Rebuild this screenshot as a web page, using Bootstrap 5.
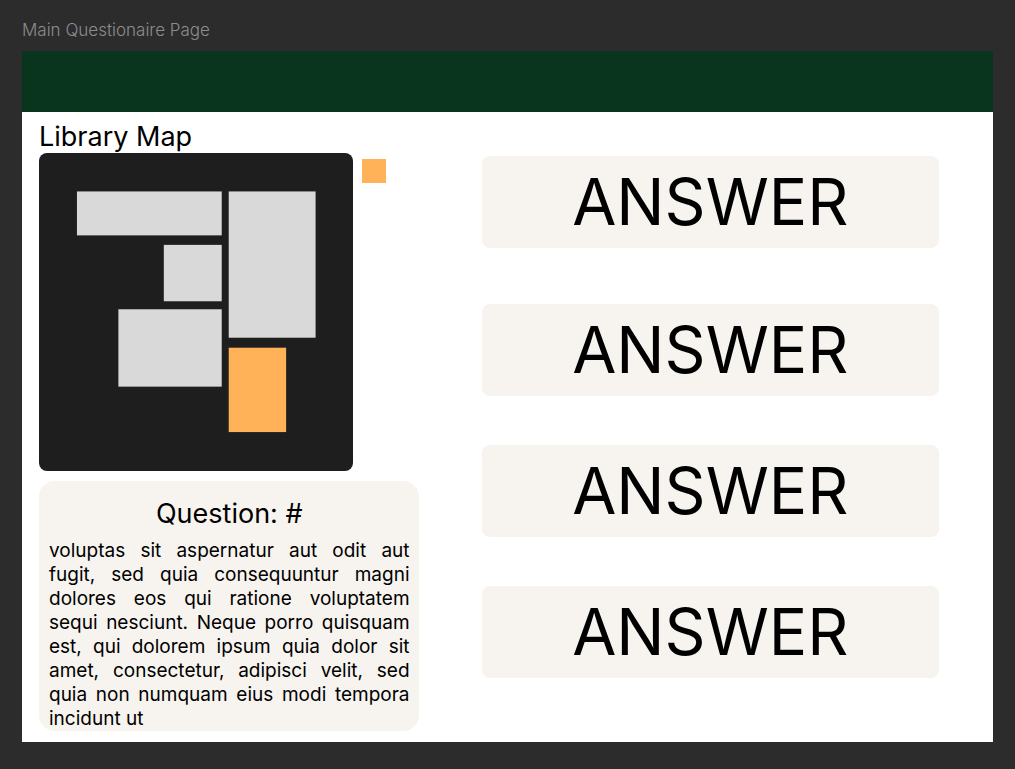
<!DOCTYPE html>
<html lang="en">
<head>
<meta charset="utf-8">
<meta name="viewport" content="width=device-width, initial-scale=1">
<title>Main Questionaire Page</title>
<link href="https://cdn.jsdelivr.net/npm/bootstrap@5.3.0/dist/css/bootstrap.min.css" rel="stylesheet">
<style>
  body { background: #2c2c2c; color: #000; font-family: Inter, sans-serif; padding: 18px 22px 27px; }
  .frame-label { color: #8c8c8c; font-size: 17px; font-weight: 300; line-height: 24px; margin-bottom: 9px; }
  .top-bar { background: #09351e; height: 61px; }
  .board { display: grid; grid-template-columns: 380fr 458fr; column-gap: 63px; padding: 9px 54px 11px 17px; }
  .panel-title { font-size: 27px; line-height: 32px; font-weight: 400; margin: 0; }
  .map-row { gap: 9px; padding-right: 33px; }
  .library-map { background: #1e1e1e; border-radius: 8px; }
  .library-map svg { display: block; width: 100%; }
  .swatch { background: #ffb258; width: 24px; height: 24px; margin-top: 6px; }
  .question { background: #f7f3ee; border-radius: 16px; margin-top: 10px; padding: 17px 9px 0 10px; }
  .question p { font-size: 19px; line-height: 24px; text-align: justify; margin: 9px 0 0; }
  .answers { gap: 49px; padding-top: 35px; }
  .answer, .answer:hover { background: #f7f3ee; color: #000; border: 0; border-radius: 8px; padding: 6px; font-size: 64px; line-height: 80px; }
  .answer:first-child { margin-bottom: 7px; }
</style>
</head>
<body>
  <div class="frame-label">Main Questionaire Page</div>
  <div class="bg-white">
    <header class="top-bar"></header>
    <main class="board">
      <section>
        <h1 class="panel-title">Library Map</h1>
        <div class="map-row d-flex align-items-start">
          <div class="library-map flex-grow-1">
            <svg viewBox="0 0 314 318" role="img" aria-label="Library floor map">
              <g fill="#d9d9d9">
                <rect x="38" y="38.500" width="145" height="44"/>
                <rect x="190" y="38.500" width="87" height="146.500"/>
                <rect x="125" y="92" width="58" height="56.500"/>
                <rect x="79.500" y="156.500" width="103.500" height="77.500"/>
              </g>
              <rect x="190" y="195" width="57.500" height="84.500" fill="#ffb258"/>
            </svg>
          </div>
          <div class="swatch flex-shrink-0"></div>
        </div>
        <article class="question">
          <h2 class="panel-title text-center">Question: #</h2>
          <p>voluptas sit aspernatur aut odit aut fugit, sed quia consequuntur magni dolores eos qui ratione voluptatem sequi nesciunt. Neque porro quisquam est, qui dolorem ipsum quia dolor sit amet, consectetur, adipisci velit, sed quia non numquam eius modi tempora incidunt ut</p>
        </article>
      </section>
      <section class="answers d-flex flex-column">
        <button type="button" class="btn answer">ANSWER</button>
        <button type="button" class="btn answer">ANSWER</button>
        <button type="button" class="btn answer">ANSWER</button>
        <button type="button" class="btn answer">ANSWER</button>
      </section>
    </main>
  </div>
  <script src="https://cdn.jsdelivr.net/npm/bootstrap@5.3.0/dist/js/bootstrap.bundle.min.js"></script>
</body>
</html>
